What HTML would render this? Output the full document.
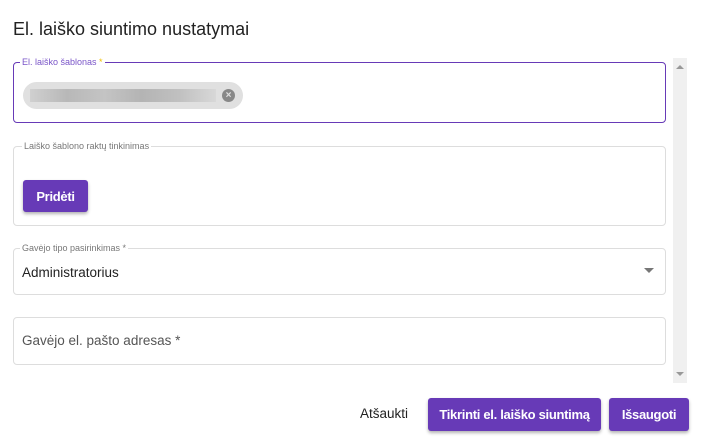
<!DOCTYPE html>
<html><head><style>
body{margin:0;width:706px;height:441px;background:#fff;font-family:"Liberation Sans",sans-serif;position:relative;overflow:hidden;color:#222}
.a{position:absolute}
.f{position:absolute;left:13px;width:651px;border:1px solid #ddd;border-radius:4px}
.lbl{position:absolute;background:#fff;font-size:9px;color:#777;padding:0 2px}
.btn{position:absolute;background:#673ab7;color:#fff;font-weight:bold;font-size:13px;letter-spacing:-0.3px;border-radius:3px;box-shadow:0 2px 3px rgba(0,0,0,.3);display:flex;align-items:center;justify-content:center;white-space:nowrap}
</style></head><body>
<div class="a" style="left:13px;top:19px;font-size:18px;color:#222">El. laiško siuntimo nustatymai</div>
<div class="a" style="left:673px;top:58px;width:14px;height:325px;background:#f0f0f0"></div>
<div class="a" style="left:676px;top:65px;width:0;height:0;border:4px solid transparent;border-bottom-color:#999;border-top:0"></div>
<div class="a" style="left:676px;top:372px;width:0;height:0;border:4px solid transparent;border-top-color:#999;border-bottom:0"></div>

<div class="f" style="top:62px;height:59px;border-color:#673ab7"></div>
<div class="lbl" style="left:20px;top:57px;color:#7a55c8">El. laiško šablonas <span style="color:#f0c000">*</span></div>
<div class="a" style="left:23px;top:82px;width:220px;height:27px;border-radius:14px;background:#e0e0e0"></div>
<div class="a" style="left:30px;top:89px;width:186px;height:13px;background:linear-gradient(90deg,#d0d0d0,#b8b8b8 20%,#c4c4c4 40%,#b4b4b4 60%,#c0c0c0 80%,#d8d8d8)"></div>
<div class="a" style="left:222px;top:89px;width:13px;height:13px;border-radius:50%;background:#888;color:#e0e0e0;font-size:10px;line-height:13px;text-align:center;font-weight:bold">×</div>

<div class="f" style="top:146px;height:78px"></div>
<div class="lbl" style="left:22px;top:141px">Laiško šablono raktų tinkinimas</div>
<div class="btn" style="left:23px;top:180px;width:65px;height:32px">Pridėti</div>

<div class="f" style="top:248px;height:45px"></div>
<div class="lbl" style="left:20px;top:243px">Gavėjo tipo pasirinkimas *</div>
<div class="a" style="left:22px;top:265px;font-size:13.5px">Administratorius</div>
<div class="a" style="left:644px;top:268px;width:0;height:0;border:5px solid transparent;border-top-color:#777;border-bottom:0"></div>

<div class="f" style="top:317px;height:46px"></div>
<div class="a" style="left:22px;top:333px;font-size:13.5px;color:#555">Gavėjo el. pašto adresas *</div>

<div class="a" style="left:360px;top:406px;font-size:13.5px;color:#222">Atšaukti</div>
<div class="btn" style="left:428px;top:398px;width:173px;height:33px">Tikrinti el. laiško siuntimą</div>
<div class="btn" style="left:609px;top:398px;width:80px;height:33px">Išsaugoti</div>
</body></html>
